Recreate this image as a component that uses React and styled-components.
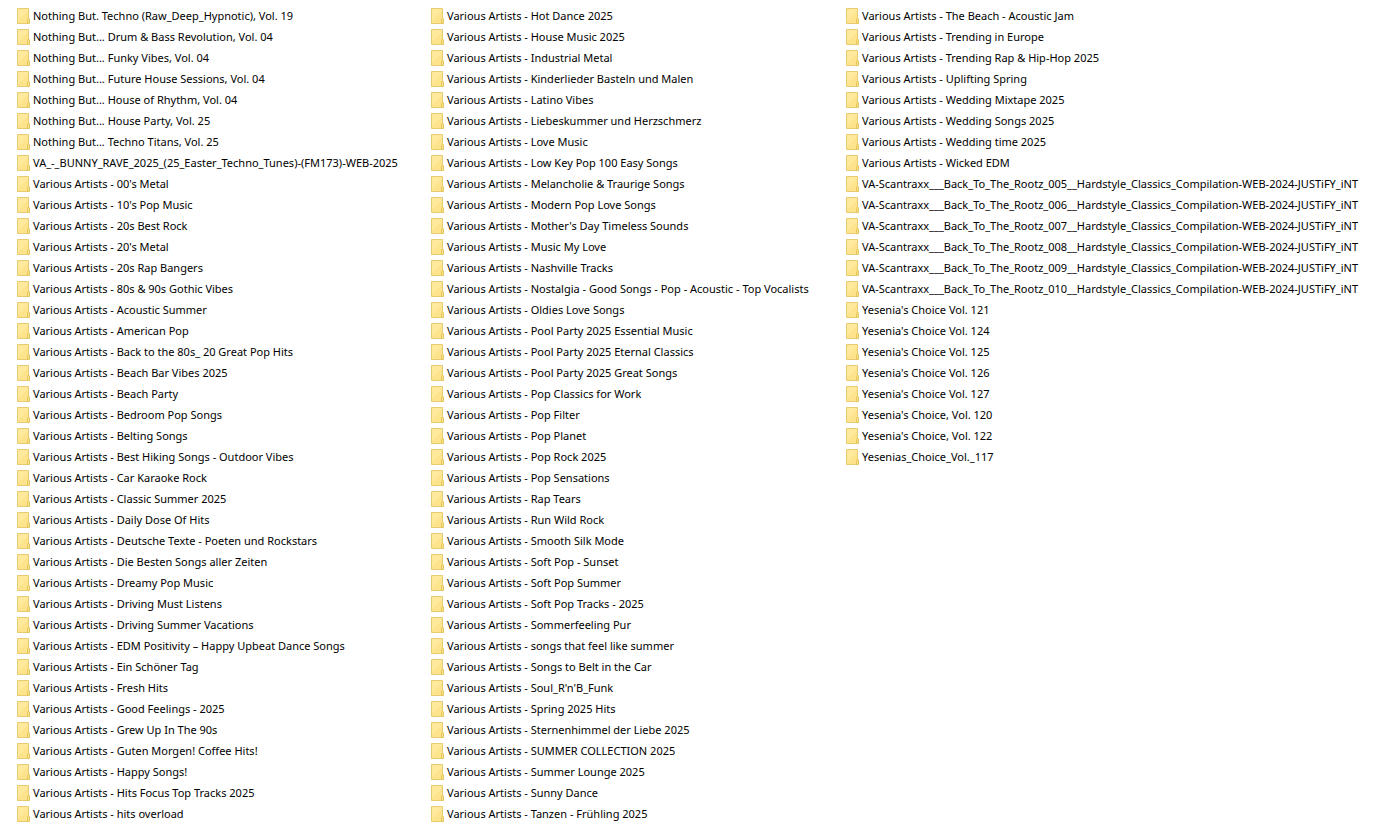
import React from 'react'
import styled, { createGlobalStyle } from 'styled-components';

const folders = [
    "Nothing But. Techno (Raw_Deep_Hypnotic), Vol. 19",
    "Nothing But... Drum & Bass Revolution, Vol. 04",
    "Nothing But... Funky Vibes, Vol. 04",
    "Nothing But... Future House Sessions, Vol. 04",
    "Nothing But... House of Rhythm, Vol. 04",
    "Nothing But... House Party, Vol. 25",
    "Nothing But... Techno Titans, Vol. 25",
    "VA_-_BUNNY_RAVE_2025_(25_Easter_Techno_Tunes)-(FM173)-WEB-2025",
    "Various Artists - 00's Metal",
    "Various Artists - 10's Pop Music",
    "Various Artists - 20s Best Rock",
    "Various Artists - 20's Metal",
    "Various Artists - 20s Rap Bangers",
    "Various Artists - 80s & 90s Gothic Vibes",
    "Various Artists - Acoustic Summer",
    "Various Artists - American Pop",
    "Various Artists - Back to the 80s_ 20 Great Pop Hits",
    "Various Artists - Beach Bar Vibes 2025",
    "Various Artists - Beach Party",
    "Various Artists - Bedroom Pop Songs",
    "Various Artists - Belting Songs",
    "Various Artists - Best Hiking Songs - Outdoor Vibes",
    "Various Artists - Car Karaoke Rock",
    "Various Artists - Classic Summer 2025",
    "Various Artists - Daily Dose Of Hits",
    "Various Artists - Deutsche Texte - Poeten und Rockstars",
    "Various Artists - Die Besten Songs aller Zeiten",
    "Various Artists - Dreamy Pop Music",
    "Various Artists - Driving Must Listens",
    "Various Artists - Driving Summer Vacations",
    "Various Artists - EDM Positivity – Happy Upbeat Dance Songs",
    "Various Artists - Ein Schöner Tag",
    "Various Artists - Fresh Hits",
    "Various Artists - Good Feelings - 2025",
    "Various Artists - Grew Up In The 90s",
    "Various Artists - Guten Morgen! Coffee Hits!",
    "Various Artists - Happy Songs!",
    "Various Artists - Hits Focus Top Tracks 2025",
    "Various Artists - hits overload",
    "Various Artists - Hot Dance 2025",
    "Various Artists - House Music 2025",
    "Various Artists - Industrial Metal",
    "Various Artists - Kinderlieder Basteln und Malen",
    "Various Artists - Latino Vibes",
    "Various Artists - Liebeskummer und Herzschmerz",
    "Various Artists - Love Music",
    "Various Artists - Low Key Pop 100 Easy Songs",
    "Various Artists - Melancholie & Traurige Songs",
    "Various Artists - Modern Pop Love Songs",
    "Various Artists - Mother's Day Timeless Sounds",
    "Various Artists - Music My Love",
    "Various Artists - Nashville Tracks",
    "Various Artists - Nostalgia - Good Songs - Pop - Acoustic - Top Vocalists",
    "Various Artists - Oldies Love Songs",
    "Various Artists - Pool Party 2025 Essential Music",
    "Various Artists - Pool Party 2025 Eternal Classics",
    "Various Artists - Pool Party 2025 Great Songs",
    "Various Artists - Pop Classics for Work",
    "Various Artists - Pop Filter",
    "Various Artists - Pop Planet",
    "Various Artists - Pop Rock 2025",
    "Various Artists - Pop Sensations",
    "Various Artists - Rap Tears",
    "Various Artists - Run Wild Rock",
    "Various Artists - Smooth Silk Mode",
    "Various Artists - Soft Pop - Sunset",
    "Various Artists - Soft Pop Summer",
    "Various Artists - Soft Pop Tracks - 2025",
    "Various Artists - Sommerfeeling Pur",
    "Various Artists - songs that feel like summer",
    "Various Artists - Songs to Belt in the Car",
    "Various Artists - Soul_R'n'B_Funk",
    "Various Artists - Spring 2025 Hits",
    "Various Artists - Sternenhimmel der Liebe 2025",
    "Various Artists - SUMMER COLLECTION 2025",
    "Various Artists - Summer Lounge 2025",
    "Various Artists - Sunny Dance",
    "Various Artists - Tanzen - Frühling 2025",
    "Various Artists - The Beach - Acoustic Jam",
    "Various Artists - Trending in Europe",
    "Various Artists - Trending Rap & Hip-Hop 2025",
    "Various Artists - Uplifting Spring",
    "Various Artists - Wedding Mixtape 2025",
    "Various Artists - Wedding Songs 2025",
    "Various Artists - Wedding time 2025",
    "Various Artists - Wicked EDM",
    "VA-Scantraxx___Back_To_The_Rootz_005__Hardstyle_Classics_Compilation-WEB-2024-JUSTiFY_iNT",
    "VA-Scantraxx___Back_To_The_Rootz_006__Hardstyle_Classics_Compilation-WEB-2024-JUSTiFY_iNT",
    "VA-Scantraxx___Back_To_The_Rootz_007__Hardstyle_Classics_Compilation-WEB-2024-JUSTiFY_iNT",
    "VA-Scantraxx___Back_To_The_Rootz_008__Hardstyle_Classics_Compilation-WEB-2024-JUSTiFY_iNT",
    "VA-Scantraxx___Back_To_The_Rootz_009__Hardstyle_Classics_Compilation-WEB-2024-JUSTiFY_iNT",
    "VA-Scantraxx___Back_To_The_Rootz_010__Hardstyle_Classics_Compilation-WEB-2024-JUSTiFY_iNT",
    "Yesenia's Choice Vol. 121",
    "Yesenia's Choice Vol. 124",
    "Yesenia's Choice Vol. 125",
    "Yesenia's Choice Vol. 126",
    "Yesenia's Choice Vol. 127",
    "Yesenia's Choice, Vol. 120",
    "Yesenia's Choice, Vol. 122",
    "Yesenias_Choice_Vol._117",
];

const FolderIcon = () => (
    <Icon viewBox="0 0 13 16" aria-hidden="true">
        <path d="M.5.5h11v15H.5z" fill="#fde48c" stroke="#e6cb70" />
        <path d="M1 1h10v2L1 13z" fill="#fee99c" />
        <path d="M10.5 15.5v-4l1-1.5 1 1v4.500z" fill="#fbe38a" stroke="#e3c55c" />
    </Icon>
)

const App = () => (
    <>
        <GlobalStyle />
        <FolderList>
            {folders.map(name => (
                <Folder key={name}>
                    <FolderIcon />
                    <Name>{name}</Name>
                </Folder>
            ))}
        </FolderList>
    </>
)

const GlobalStyle = createGlobalStyle`
    body {
        margin: 0;
        background: #fff;
        color: #000;
        font-family: "Noto Sans", "Open Sans", sans-serif;
        font-size: 11px;
    }
`;

const FolderList = styled.ul`
    display: grid;
    grid-auto-flow: column;
    grid-template-rows: repeat(39, 21px);
    grid-template-columns: minmax(0, 414fr) minmax(0, 415fr) minmax(0, 539fr);
    margin: 0;
    padding: 5px 0 5px 17px;
    list-style: none;
`;

const Folder = styled.li`
    display: flex;
    align-items: center;
    gap: 3px;
    min-width: 0;
`;

const Icon = styled.svg`
    flex: none;
    width: 13px;
    height: 16px;
`;

const Name = styled.span`
    line-height: 21px;
    white-space: nowrap;
`;

export default App
